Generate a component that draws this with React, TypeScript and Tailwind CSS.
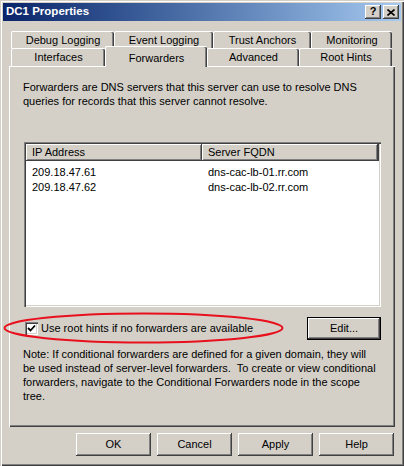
import React from "react";

const raised =
  "bg-[#d4d0c8] shadow-[inset_-1px_-1px_0_#404040,inset_1px_1px_0_#ffffff,inset_-2px_-2px_0_#808080]";

function Tab({ label, w, selected = false }: { label: string; w: string; selected?: boolean }) {
  if (selected) {
    return (
      <div
        className={`${w} relative z-10 -mt-[2px] h-[21px] shrink-0 flex justify-center pt-[3px] bg-[#d4d0c8] border-t border-l border-white rounded-t-[2px] shadow-[inset_-1px_0_0_#404040,inset_-2px_0_0_#808080]`}
      >
        {label}
      </div>
    );
  }
  return (
    <div
      className={`${w} h-full shrink-0 flex items-center justify-center bg-[#d4d0c8] border-t border-l border-white rounded-t-[2px] shadow-[inset_-1px_0_0_#404040,inset_-2px_0_0_#808080]`}
    >
      {label}
    </div>
  );
}

function Button({ label, className = "" }: { label: string; className?: string }) {
  return (
    <div className={`${raised} h-[23px] flex items-center justify-center ${className}`}>{label}</div>
  );
}

export default function App() {
  return (
    <div className="relative w-[404px] h-[466px] p-[3px] flex flex-col bg-[#d4d0c8] text-[11px] text-black font-['Liberation_Sans',Arial,sans-serif] shadow-[inset_1px_1px_0_#d4d0c8,inset_2px_2px_0_#ffffff,inset_-1px_-1px_0_#404040,inset_-2px_-2px_0_#808080]">
      {/* title bar */}
      <div className="h-[18px] flex items-center pl-[3px] pr-[2px] bg-gradient-to-r from-[#0a246a] to-[#a6caf0]">
        <span className="text-white font-bold text-[11.5px]">DC1 Properties</span>
        <div className="ml-auto flex gap-[2px]">
          <div className={`${raised} w-[16px] h-[14px] flex items-center justify-center font-bold text-[11px] leading-none pb-[1px]`}>
            ?
          </div>
          <div className={`${raised} w-[16px] h-[14px] flex items-center justify-center`}>
            <svg width="8" height="7" viewBox="0 0 8 7">
              <path d="M0.5 0.5 L7.5 6.5 M7.5 0.5 L0.5 6.5" stroke="#000" strokeWidth="1.6" />
            </svg>
          </div>
        </div>
      </div>

      {/* tabs */}
      <div className="mt-[10px] ml-[8px] flex h-[17px]">
        <Tab label="Debug Logging" w="w-[103px]" />
        <Tab label="Event Logging" w="w-[99px]" />
        <Tab label="Trust Anchors" w="w-[98px]" />
        <Tab label="Monitoring" w="w-[81px]" />
      </div>
      <div className="ml-[8px] flex items-start h-[18px]">
        <Tab label="Interfaces" w="w-[94px]" />
        <Tab label="Forwarders" w="w-[102px]" selected />
        <Tab label="Advanced" w="w-[92px]" />
        <Tab label="Root Hints" w="w-[93px]" />
      </div>

      {/* panel */}
      <div className="ml-[6px] w-[386px] h-[361px] pl-[14px] pt-[14px] flex flex-col shadow-[inset_1px_1px_0_#ffffff,inset_-1px_-1px_0_#404040,inset_-2px_-2px_0_#808080]">
        <p className="leading-[14px] whitespace-nowrap">
          Forwarders are DNS servers that this server can use to resolve DNS
          <br />
          queries for records that this server cannot resolve.
        </p>

        <div className="mt-[34px] ml-[1px] w-[357px] h-[165px] p-[2px] bg-white flex flex-col shadow-[inset_1px_1px_0_#808080,inset_2px_2px_0_#404040,inset_-1px_-1px_0_#ffffff,inset_-2px_-2px_0_#d4d0c8]">
          <div className="flex h-[17px]">
            <div className={`${raised} w-[176px] pl-[6px] flex items-center`}>IP Address</div>
            <div className={`${raised} w-[176px] pl-[6px] flex items-center`}>Server FQDN</div>
            <div className={`${raised} flex-1`} />
          </div>
          <div className="pt-[4px]">
            {[
              ["209.18.47.61", "dns-cac-lb-01.rr.com"],
              ["209.18.47.62", "dns-cac-lb-02.rr.com"],
            ].map(([ip, fqdn]) => (
              <div key={ip} className="flex h-[15px] items-center">
                <div className="w-[176px] pl-[6px]">{ip}</div>
                <div className="pl-[6px]">{fqdn}</div>
              </div>
            ))}
          </div>
        </div>

        <div className="mt-[10px] ml-[1px] w-[357px] h-[23px] flex items-center">
          <div className="ml-[1px] w-[13px] h-[13px] bg-white flex items-center justify-center shadow-[inset_1px_1px_0_#808080,inset_2px_2px_0_#404040,inset_-1px_-1px_0_#ffffff,inset_-2px_-2px_0_#d4d0c8]">
            <svg width="9" height="9" viewBox="0 0 9 9">
              <path d="M1 4 L3.5 6.5 L8 1.5" stroke="#000" strokeWidth="1.8" fill="none" />
            </svg>
          </div>
          <span className="ml-[3px]">Use root hints if no forwarders are available</span>
          <div className="ml-auto w-[74px] h-[23px] border border-black">
            <Button label="Edit..." className="h-full" />
          </div>
        </div>

        <p className="mt-[7px] leading-[14px] whitespace-pre">
          {"Note: If conditional forwarders are defined for a given domain, they will\nbe used instead of server-level forwarders.  To create or view conditional\nforwarders, navigate to the Conditional Forwarders node in the scope\ntree."}
        </p>
      </div>

      {/* dialog buttons */}
      <div className="mt-[6px] mr-[7px] flex justify-end gap-[6px]">
        <Button label="OK" className="w-[75px]" />
        <Button label="Cancel" className="w-[75px]" />
        <Button label="Apply" className="w-[75px]" />
        <Button label="Help" className="w-[75px]" />
      </div>

      {/* annotation */}
      <svg className="absolute left-[3px] top-[312px]" width="281" height="32" viewBox="0 0 281 32">
        <ellipse cx="140.5" cy="16" rx="139" ry="14.5" fill="none" stroke="#e8101c" strokeWidth="2" />
      </svg>
    </div>
  );
}
